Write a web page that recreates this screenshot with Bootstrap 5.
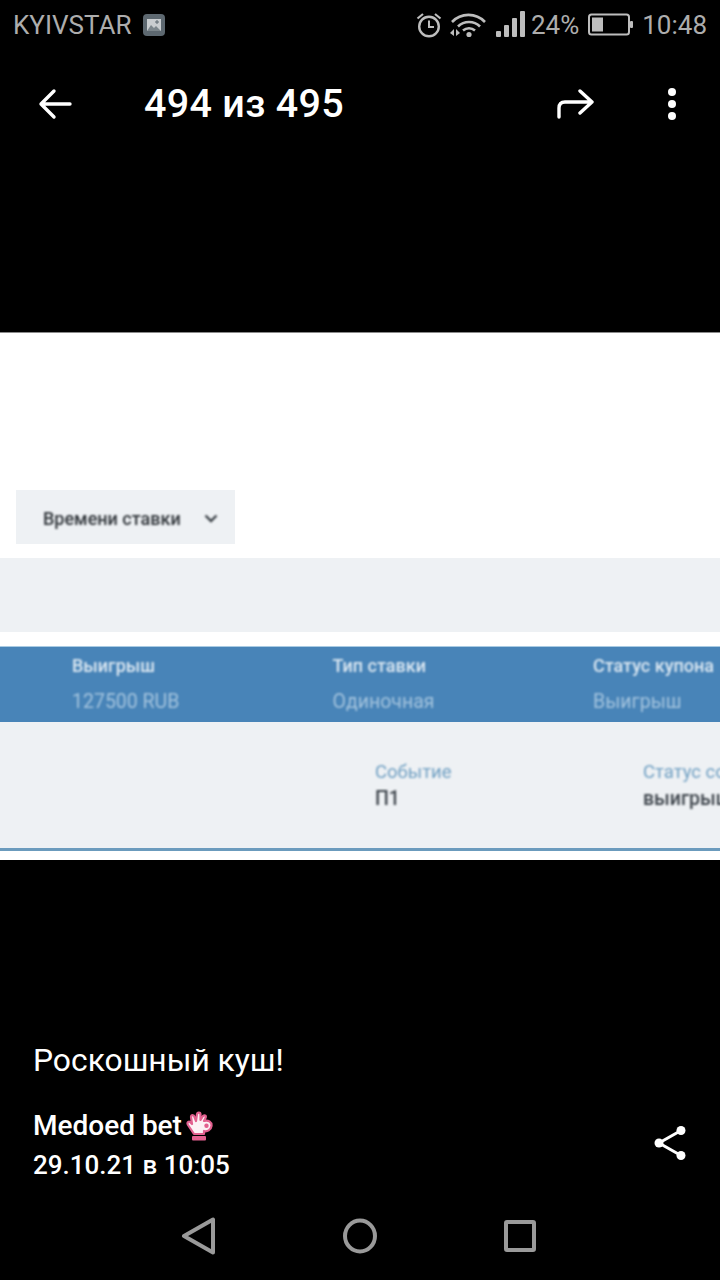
<!DOCTYPE html>
<html lang="ru">
<head>
  <meta charset="UTF-8" />
  <meta name="viewport" content="width=device-width, initial-scale=1" />
  <title>494 из 495</title>
  <link href="https://cdn.jsdelivr.net/npm/bootstrap@5.3.0/dist/css/bootstrap.min.css" rel="stylesheet" />
  <style>
    html, body { background: #000; }
    body { font-family: Roboto, "Liberation Sans", sans-serif; color: #fff; width: 720px; height: 1280px; overflow: hidden; }
    .screen { height: 1280px; }
    .status-bar { height: 49px; padding: 0 13px 0 13px; color: #adadad; font-size: 26px; line-height: 1; }
    .sim-icon { margin-left: 10px; }
    .status-right { gap: 9px; }
    .wifi-icon { margin-left: -1px; margin-right: 1px; }
    .signal-icon { margin-right: -3px; }
    .app-bar { height: 110px; padding: 0 41px 0 38px; }
    .app-title { font-size: 39.5px; font-weight: 500; margin-left: 72px; line-height: 1; letter-spacing: .3px; }
    .app-dots { margin-left: 70px; }
    .top-gap { height: 173px; }
    .photo { height: 528px; background: #fff; border-top: 1px solid #8a8a8a; overflow: hidden; color: #2f3439; padding-top: 157px; }
    .soft-text { filter: blur(.8px); }
    .sort-box { width: 219px; height: 54px; margin-left: 16px; background: #eef1f4; padding: 2px 17px 0 27px; font-size: 18px; font-weight: 500; }
    .grey-band { height: 74px; margin-top: 14px; background: #eef1f4; }
    .blue-band { height: 76px; margin-top: 14px; background: #4884b8; border-top: 1px solid #a9cbe3; }
    .blue-col { width: 260.5px; flex: none; padding-top: 8px; white-space: nowrap; }
    .blue-col-first { margin-left: 72px; }
    .blue-head { color: #dce8f2; font-size: 18px; font-weight: 500; line-height: 22px; }
    .blue-val { color: #a4c4de; font-size: 19.5px; line-height: 24px; margin-top: 13px; }
    .detail-band { height: 129px; background: #eef1f4; padding-left: 375px; padding-top: 39px; border-bottom: 3px solid #6b9bbd; }
    .detail-col { width: 268px; flex: none; white-space: nowrap; }
    .detail-head { color: #6f9fc2; font-size: 18.5px; line-height: 22px; }
    .detail-val { color: #3d444b; font-size: 19.5px; font-weight: 500; line-height: 26px; margin-top: 3px; }
    .caption { margin: 182px 0 0 33px; font-size: 31.8px; line-height: 36px; }
    .meta-row { margin-top: 30px; padding: 0 33px; }
    .author { font-size: 28px; font-weight: 500; line-height: 36px; }
    .hand-icon { margin-left: 3px; }
    .post-date { font-size: 26px; font-weight: 500; line-height: 36px; margin-top: 3px; }
    .share-icon { margin-bottom: 6px; }
    .nav-keys { padding: 34px 0 0 180px; gap: 127px; }
  </style>
</head>
<body>
  <div class="screen d-flex flex-column">
    <!-- Status bar -->
    <div class="status-bar d-flex align-items-center">
      <span>KYIVSTAR</span>
      <svg class="sim-icon" width="24" height="24" viewBox="0 0 24 24">
        <rect x="1" y="1" width="22" height="22" rx="4" fill="#5d6870"/>
        <rect x="5" y="6" width="14" height="12" fill="#c9cdd0"/>
        <path d="M5 18l4-6 3 3 2-2 5 5z" fill="#7c868c"/>
        <path d="M15 7v4M13 9h4" stroke="#5d6870" stroke-width="1"/>
      </svg>
      <div class="status-right ms-auto d-flex align-items-center">
        <svg width="26" height="28" viewBox="0 0 26 28" fill="none" stroke="#bdbdbd" stroke-width="2.400">
          <circle cx="13" cy="15.500" r="9.800"/>
          <path d="M13 9.500v6.500h5" stroke-width="2"/>
          <path d="M1.500 7.500L7 3M24.500 7.500L19 3" stroke-width="2.200"/>
        </svg>
        <svg class="wifi-icon" width="36" height="28" viewBox="0 0 36 28" fill="none" stroke="#bdbdbd" stroke-width="2.600">
          <path d="M2 11C11 1.500 26 1.500 35 11"/>
          <path d="M8 15.500C14 9.500 24 9.500 30 15.500"/>
          <path d="M13 19.500C16.500 16.500 21.500 16.500 25 19.500"/>
          <circle cx="19" cy="23.500" r="2.600" fill="#bdbdbd" stroke="none"/>
          <path d="M0 22l4-4v7zM6 18l4 4-4 3z" fill="#bdbdbd" stroke="none"/>
        </svg>
        <svg class="signal-icon" width="29" height="28" viewBox="0 0 29 28" fill="#bdbdbd">
          <rect x="0" y="20" width="5" height="6" rx="1"/>
          <rect x="8" y="14" width="5" height="12" rx="1"/>
          <rect x="16" y="7" width="5" height="19" rx="1"/>
          <rect x="24" y="0" width="5" height="26" rx="1"/>
        </svg>
        <span>24%</span>
        <svg width="45" height="24" viewBox="0 0 45 24" fill="none">
          <rect x="1" y="1.500" width="40" height="20" rx="2.500" stroke="#bdbdbd" stroke-width="2"/>
          <rect x="4" y="4.500" width="11" height="14" fill="#bdbdbd"/>
          <rect x="42" y="8" width="3" height="7" rx="1" fill="#bdbdbd"/>
        </svg>
        <span>10:48</span>
      </div>
    </div>

    <!-- Toolbar -->
    <div class="app-bar d-flex align-items-center">
      <svg width="34" height="32" viewBox="0 0 34 32" fill="none" stroke="#fff" stroke-width="3.400" stroke-linecap="round" stroke-linejoin="round">
        <path d="M32 16H3M16 3L3 16l13 13"/>
      </svg>
      <div class="app-title">494 из 495</div>
      <svg class="ms-auto" width="38" height="30" viewBox="0 0 38 30" fill="none" stroke="#fff" stroke-width="3.400" stroke-linecap="round" stroke-linejoin="round">
        <path d="M2 28V19c0-4 2-6 6-6h27M23 2l12 11-12 11"/>
      </svg>
      <svg class="app-dots" width="14" height="34" viewBox="0 0 14 34" fill="#fff">
        <circle cx="7" cy="5" r="4"/><circle cx="7" cy="17" r="4"/><circle cx="7" cy="29" r="4"/>
      </svg>
    </div>

    <div class="top-gap"></div>

    <!-- Photo -->
    <div class="photo">
      <div class="sort-box d-flex align-items-center justify-content-between">
        <span class="soft-text">Времени ставки</span>
        <svg class="soft-text" width="14" height="9" viewBox="0 0 14 9" fill="none" stroke="#3a4046" stroke-width="2.400"><path d="M1.500 1.500L7 7l5.500-5.500"/></svg>
      </div>
      <div class="grey-band"></div>
      <div class="blue-band d-flex">
        <div class="blue-col blue-col-first soft-text">
          <div class="blue-head">Выигрыш</div>
          <div class="blue-val">127500 RUB</div>
        </div>
        <div class="blue-col soft-text">
          <div class="blue-head">Тип ставки</div>
          <div class="blue-val">Одиночная</div>
        </div>
        <div class="blue-col soft-text">
          <div class="blue-head">Статус купона</div>
          <div class="blue-val">Выигрыш</div>
        </div>
      </div>
      <div class="detail-band d-flex">
        <div class="detail-col soft-text">
          <div class="detail-head">Событие</div>
          <div class="detail-val">П1</div>
        </div>
        <div class="detail-col soft-text">
          <div class="detail-head">Статус события</div>
          <div class="detail-val">выигрыш</div>
        </div>
      </div>
    </div>

    <!-- Caption -->
    <div class="caption">Роскошный куш!</div>
    <div class="meta-row d-flex align-items-center justify-content-between">
      <div>
        <div class="author d-flex align-items-center">Medoed bet
          <svg class="hand-icon" width="28" height="30" viewBox="0 0 28 30">
            <path d="M9 23L3 14C1.500 11 4 9.500 6 12L7 13L6 6C6 3.500 9 3.500 9.500 6L11 10L12 3C12.500 1 15.500 1 15.500 3.500V9L18 5C20 3.500 21.500 5 20.500 7L19 10C23 8.500 27 11 26.500 15C26 19 22 21 19 20V23Z" fill="#fdf1f5" stroke="#e2608f" stroke-width="2.200" stroke-linejoin="round"/>
            <circle cx="21.500" cy="14.800" r="2.200" fill="#e2608f"/>
            <rect x="7" y="25" width="14" height="4.500" rx="1" fill="#e2608f"/>
          </svg>
        </div>
        <div class="post-date">29.10.21 в 10:05</div>
      </div>
      <svg class="share-icon" width="34" height="38" viewBox="0 0 34 38" fill="#fff" stroke="#fff" stroke-width="3">
        <path d="M28 6.500L6 19l22 12.500" fill="none"/>
        <circle cx="28" cy="6.500" r="4.500" stroke="none"/>
        <circle cx="6" cy="19" r="4.500" stroke="none"/>
        <circle cx="28" cy="31.500" r="4.500" stroke="none"/>
      </svg>
    </div>

    <!-- System nav -->
    <div class="nav-keys d-flex align-items-center">
      <svg width="36" height="38" viewBox="0 0 36 38" fill="none" stroke="#9a9a9a" stroke-width="4" stroke-linejoin="round">
        <path d="M33 2.500v33L4 19z"/>
      </svg>
      <svg width="34" height="36" viewBox="0 0 34 36" fill="none" stroke="#9a9a9a" stroke-width="4">
        <ellipse cx="17" cy="18" rx="15" ry="15.500"/>
      </svg>
      <svg width="32" height="32" viewBox="0 0 32 32" fill="none" stroke="#9a9a9a" stroke-width="4" stroke-linejoin="round">
        <rect x="2" y="2" width="28" height="28" rx="1"/>
      </svg>
    </div>
  </div>
<script src="https://cdn.jsdelivr.net/npm/bootstrap@5.3.0/dist/js/bootstrap.bundle.min.js"></script>
</body>
</html>
